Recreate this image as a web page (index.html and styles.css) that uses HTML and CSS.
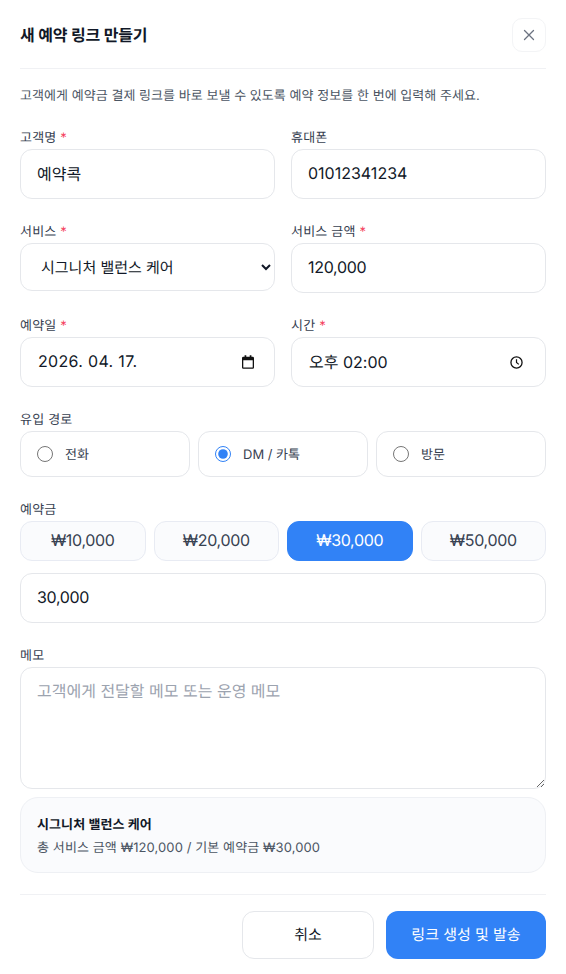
FILE: index.html
```html
<!DOCTYPE html>
<html lang="ko">
<head>
  <meta charset="UTF-8">
  <meta name="viewport" content="width=device-width, initial-scale=1.0">
  <title>새 예약 링크 만들기</title>
  <link rel="stylesheet" href="styles.css">
</head>
<body>

<div class="modal">

  <!-- Header -->
  <header class="modal-header">
    <h1>새 예약 링크 만들기</h1>
    <button class="close-btn" type="button" aria-label="닫기">
      <svg width="12" height="12" viewBox="0 0 12 12"><path d="M1.500 1.500l9 9M10.500 1.500l-9 9" stroke="#6b7280" stroke-width="1.300" stroke-linecap="round" fill="none"/></svg>
    </button>
  </header>

  <p class="desc">고객에게 예약금 결제 링크를 바로 보낼 수 있도록 예약 정보를 한 번에 입력해 주세요.</p>

  <form class="form">

    <div class="row">
      <div class="field">
        <label>고객명 <span class="req">*</span></label>
        <input class="input" type="text" value="예약콕">
      </div>
      <div class="field">
        <label>휴대폰</label>
        <input class="input" type="text" value="01012341234">
      </div>
    </div>

    <div class="row">
      <div class="field">
        <label>서비스 <span class="req">*</span></label>
        <select class="input select">
          <option>시그니처 밸런스 케어</option>
        </select>
      </div>
      <div class="field">
        <label>서비스 금액 <span class="req">*</span></label>
        <input class="input amount" type="text" value="120,000">
      </div>
    </div>

    <div class="row">
      <div class="field">
        <label>예약일 <span class="req">*</span></label>
        <div class="input picker date">
          <input type="text" value="2026. 04. 17.">
          <svg width="12" height="14" viewBox="0 0 14 16"><path d="M3 0h2v2h4V0h2v2h1.500A1.500 1.500 0 0 1 14 3.500v11a1.500 1.500 0 0 1-1.500 1.500h-11A1.500 1.500 0 0 1 0 14.500v-11A1.500 1.500 0 0 1 1.500 2H3zM1.500 6v8.500h11V6z" fill="#111"/></svg>
        </div>
      </div>
      <div class="field">
        <label>시간 <span class="req">*</span></label>
        <div class="input picker">
          <input type="text" value="오후 02:00">
          <svg width="13" height="13" viewBox="0 0 14 14"><circle cx="7" cy="7" r="6" stroke="#111" stroke-width="1.400" fill="none"/><path d="M7 3.500V7l2.500 2" stroke="#111" stroke-width="1.300" fill="none"/></svg>
        </div>
      </div>
    </div>

    <div class="field">
      <label>유입 경로</label>
      <div class="radios">
        <label class="radio"><input type="radio" name="source"> <span>전화</span></label>
        <label class="radio"><input type="radio" name="source" checked> <span>DM / 카톡</span></label>
        <label class="radio"><input type="radio" name="source"> <span>방문</span></label>
      </div>
    </div>

    <div class="field">
      <label>예약금</label>
      <div class="chips">
        <button class="chip" type="button">₩10,000</button>
        <button class="chip" type="button">₩20,000</button>
        <button class="chip active" type="button">₩30,000</button>
        <button class="chip" type="button">₩50,000</button>
      </div>
      <input class="input amount deposit" type="text" value="30,000">
    </div>

    <div class="field">
      <label>메모</label>
      <textarea class="input memo" placeholder="고객에게 전달할 메모 또는 운영 메모"></textarea>
      <div class="summary">
        <strong>시그니처 밸런스 케어</strong>
        <span>총 서비스 금액 ₩120,000 / 기본 예약금 ₩30,000</span>
      </div>
    </div>

  </form>

  <!-- Footer -->
  <footer class="modal-footer">
    <button class="btn cancel" type="button">취소</button>
    <button class="btn primary" type="button">링크 생성 및 발송</button>
  </footer>

</div>

</body>
</html>
```

FILE: styles.css
```css
* {
  box-sizing: border-box;
}

body {
  margin: 0;
  background: #ffffff;
  color: #111827;
  font-family: Inter, "Noto Sans CJK KR", sans-serif;
  text-rendering: geometricPrecision;
}

button, input, select, textarea {
  font-family: inherit;
  text-rendering: inherit;
}

.modal {
  padding: 18px 20px 15px;
}

.modal-header {
  display: flex;
  align-items: center;
  justify-content: space-between;
  padding-bottom: 16px;
  border-bottom: 1px solid #f0f1f4;
}

.modal-header h1 {
  margin: 0;
  padding-bottom: 2px;
  font-size: 16px;
  font-weight: 700;
  letter-spacing: -0.01em;
}

.close-btn {
  display: flex;
  align-items: center;
  justify-content: center;
  width: 34px;
  height: 34px;
  padding: 0;
  background: #ffffff;
  border: 1px solid #f3f4f6;
  border-radius: 10px;
}

.desc {
  margin: 17px 0 23px;
  font-size: 13px;
  line-height: 20px;
  letter-spacing: 0.04px;
  color: #4b5563;
}

.form {
  display: flex;
  flex-direction: column;
  gap: 24px;
}

.row {
  display: grid;
  grid-template-columns: 1fr 1fr;
  gap: 16px;
  align-items: start;
}

.field > label {
  display: block;
  margin-bottom: 2px;
  font-size: 13px;
  line-height: 18px;
  font-weight: 400;
  letter-spacing: 0.2px;
  color: #374151;
}

.req {
  color: #f43f5e;
}

.input {
  display: block;
  width: 100%;
  height: 50px;
  padding: 0 16px 2px;
  font-size: 16px;
  color: #111827;
  background: #ffffff;
  border: 1px solid #e5e7eb;
  border-radius: 12px;
  outline: none;
}

.amount {
  letter-spacing: -0.02em;
}

.select {
  height: 48px;
  padding-bottom: 0;
  font-size: 15px;
}

.picker {
  display: flex;
  align-items: center;
  justify-content: space-between;
  padding: 0 22px 0 16px;
}

.picker.date {
  padding-right: 20px;
}

.picker input {
  width: 200px;
  padding: 0 0 3px 1px;
  font-size: 16px;
  color: #111827;
  border: none;
  outline: none;
}

.picker.date input {
  letter-spacing: 0.02em;
}

.radios {
  display: grid;
  grid-template-columns: repeat(3, 1fr);
  gap: 8px;
}

.radio {
  display: flex;
  align-items: center;
  gap: 12px;
  height: 46px;
  padding: 0 16px;
  font-size: 13px;
  color: #374151;
  border: 1px solid #e5e7eb;
  border-radius: 12px;
}

.radio span {
  padding-bottom: 2px;
}

.radio input {
  width: 16px;
  height: 16px;
  margin: 0;
  accent-color: #3182f6;
}

.chips {
  display: grid;
  grid-template-columns: repeat(4, 1fr);
  gap: 8px;
}

.chip {
  height: 40px;
  padding: 0 0 2px;
  font-size: 16px;
  letter-spacing: -0.02em;
  color: #374151;
  background: #fafbfd;
  border: 1px solid #e8ebf3;
  border-radius: 12px;
}

.chip.active {
  color: #ffffff;
  background: #3182f6;
  border-color: #3182f6;
}

.deposit {
  margin-top: 12px;
}

.memo {
  height: 122px;
  padding: 12px 16px;
  line-height: 22px;
  resize: vertical;
}

.memo::placeholder {
  color: #9ca3af;
}

.summary {
  display: flex;
  flex-direction: column;
  gap: 5px;
  margin-top: 8px;
  padding: 18px 16px 15px;
  background: #fafbfd;
  border: 1px solid #eef0f4;
  border-radius: 18px;
}

.summary strong {
  font-size: 13px;
  line-height: 18px;
  font-weight: 700;
  letter-spacing: 0.1px;
}

.summary span {
  font-size: 13px;
  line-height: 18px;
  letter-spacing: 0.1px;
  color: #4b5563;
}

.modal-footer {
  display: flex;
  justify-content: flex-end;
  gap: 12px;
  margin-top: 21px;
  padding-top: 16px;
  border-top: 1px solid #f0f1f4;
}

.btn {
  height: 48px;
  padding: 0 0 2px;
  font-size: 15px;
  font-weight: 400;
  border-radius: 12px;
}

.cancel {
  width: 132px;
  color: #111827;
  background: #ffffff;
  border: 1px solid #e5e7eb;
}

.primary {
  width: 160px;
  color: #ffffff;
  background: #3182f6;
  border: none;
}
```
